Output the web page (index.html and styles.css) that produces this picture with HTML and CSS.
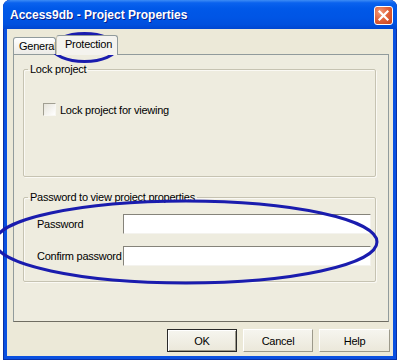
FILE: index.html
```html
<!DOCTYPE html>
<html>
<head>
<meta charset="utf-8">
<title>Access9db - Project Properties</title>
<link rel="stylesheet" href="styles.css">
</head>
<body>
<div class="screen">
  <div class="window">
    <div class="titlebar">
      <span class="title">Access9db - Project Properties</span>
      <span class="close">
        <svg width="19" height="19" viewBox="0 0 19 19">
          <path d="M5.5 5.5 L13.5 13.5 M13.5 5.5 L5.5 13.5" stroke="#fff" stroke-width="2.2" stroke-linecap="square"/>
        </svg>
      </span>
    </div>
    <div class="client">
      <div class="tabs">
        <div class="tab">General</div>
        <div class="tab active">Protection</div>
      </div>
      <div class="panel">
        <fieldset class="group group-lock">
          <legend>Lock project</legend>
          <label class="check-row"><span class="checkbox"></span><span>Lock project for viewing</span></label>
        </fieldset>
        <fieldset class="group group-pass">
          <legend>Password to view project properties</legend>
          <div class="field-row first"><span class="field-label">Password</span><span class="input"></span></div>
          <div class="field-row"><span class="field-label">Confirm password</span><span class="input"></span></div>
        </fieldset>
      </div>
      <div class="buttons">
        <div class="btn default">OK</div>
        <div class="btn">Cancel</div>
        <div class="btn help">Help</div>
      </div>
    </div>
  </div>
  <svg class="marks" width="400" height="361" viewBox="0 0 400 361">
    <ellipse cx="84.5" cy="47.5" rx="32" ry="14" fill="none" stroke="#1a1cae" stroke-width="3"/>
    <ellipse cx="186" cy="242" rx="191" ry="41" fill="none" stroke="#1a1cae" stroke-width="3"/>
  </svg>
</div>
</body>
</html>
```
FILE: styles.css
```css
html, body {
  margin: 0;
  padding: 0;
  background: #ffffff;
}

.screen {
  position: relative;
  width: 400px;
  height: 361px;
  overflow: hidden;
  background: #ffffff;
  font-family: "Liberation Sans", Arial, sans-serif;
  font-size: 11px;
  letter-spacing: -0.25px;
  color: #000;
}

.window {
  margin-left: 3px;
  width: 394px;
  height: 360px;
  box-sizing: border-box;
  display: flex;
  flex-direction: column;
  background: #0a50e0;
  border-radius: 7px 7px 0 0;
  box-shadow: inset 1px 0 0 #0831a8, inset -1px 0 0 #0831a8, inset 0 -1px 0 #0831a8;
  overflow: hidden;
}

.titlebar {
  height: 29px;
  flex: none;
  display: flex;
  align-items: center;
  justify-content: space-between;
  padding: 0 4px 0 7px;
  background: linear-gradient(to bottom, #3d8cf5 0%, #0a62ee 10%, #0058e8 30%, #0055e5 60%, #0050de 85%, #0046d0 100%);
  border-radius: 7px 7px 0 0;
}

.title {
  font-family: "Liberation Sans", Arial, sans-serif;
  font-weight: bold;
  font-size: 12px;
  letter-spacing: 0;
  color: #fff;
  text-shadow: 1px 1px 0 #0a1e8c;
  margin-top: 1px;
}

.close {
  width: 19px;
  height: 19px;
  box-sizing: border-box;
  border: 1px solid #fff;
  border-radius: 3px;
  background: radial-gradient(circle at 30% 30%, #f39a78 0%, #e2643c 45%, #c9401a 100%);
  display: flex;
  align-items: center;
  justify-content: center;
  margin-top: 1px;
}

.close svg {
  display: block;
  margin: -1px;
}

.client {
  flex: 1;
  margin: 0 4px 4px 4px;
  background: #ece9d8;
  padding: 6px 3px 0 6px;
  display: flex;
  flex-direction: column;
}

.tabs {
  height: 19px;
  display: flex;
  align-items: flex-end;
  position: relative;
  z-index: 1;
}

.tab {
  height: 17px;
  box-sizing: border-box;
  width: 43px;
  padding: 2px 0 0 5px;
  border: 1px solid #919b9c;
  border-bottom: none;
  border-radius: 3px 3px 0 0;
  background: linear-gradient(to bottom, #ffffff, #ecebe6);
  white-space: nowrap;
  overflow: hidden;
}

.tab.active {
  width: 62px;
  height: 20px;
  margin-bottom: -1px;
  padding: 2px 0 0 8px;
  background: #f4f3ee;
  border-left: 1px solid #c9c6b6;
}

.panel {
  width: 376px;
  height: 268px;
  box-sizing: border-box;
  border: 1px solid #919b9c;
  border-bottom-color: #6f6d62;
  background: #eeecdf;
  padding: 8px 0 0 9px;
}

.group {
  margin: 0;
  padding: 0;
  width: 353px;
  box-sizing: border-box;
  border: 1px solid #c6c3b2;
  box-shadow: inset 1px 1px 0 #faf9f4, 1px 1px 0 #faf9f4;
  border-radius: 2px;
  min-width: 0;
}

.group legend {
  margin-left: 4px;
  padding: 0 2px;
  line-height: 13px;
  height: 13px;
}

.group-lock {
  height: 114px;
}

.group-pass {
  height: 91px;
  margin-top: 14px;
}

.check-row {
  display: flex;
  align-items: center;
  margin: 27px 0 0 19px;
  height: 13px;
  gap: 4px;
}

.checkbox {
  width: 13px;
  height: 13px;
  box-sizing: border-box;
  border: 1px solid;
  border-color: #a19f92 #f8f7f2 #f8f7f2 #a19f92;
  background: linear-gradient(135deg, #e6e4da, #ffffff);
}

.field-row {
  display: flex;
  align-items: center;
  height: 20px;
  margin: 12px 0 0 13px;
}

.field-row.first {
  margin-top: 10px;
}

.field-label {
  width: 86px;
  flex: none;
}

.input {
  width: 248px;
  height: 20px;
  box-sizing: border-box;
  border: 1px solid;
  border-color: #85837a #f4f3ee #f4f3ee #85837a;
  background: #ffffff;
}

.buttons {
  display: flex;
  justify-content: flex-end;
  gap: 6px;
  margin-top: 7px;
}

.btn {
  width: 70px;
  height: 23px;
  box-sizing: border-box;
  border: 1px solid;
  border-color: #ffffff #9c998a #9c998a #ffffff;
  background: linear-gradient(to bottom, #f6f5ef, #ebe8da);
  display: flex;
  align-items: center;
  justify-content: center;
}

.btn.help {
  width: 71px;
}

.btn.default {
  border-color: #2a2a2a;
  box-shadow: inset 1px 1px 0 #ffffff, inset -1px -1px 0 #9c998a;
}

.marks {
  position: absolute;
  left: 0;
  top: 0;
  pointer-events: none;
}
```
